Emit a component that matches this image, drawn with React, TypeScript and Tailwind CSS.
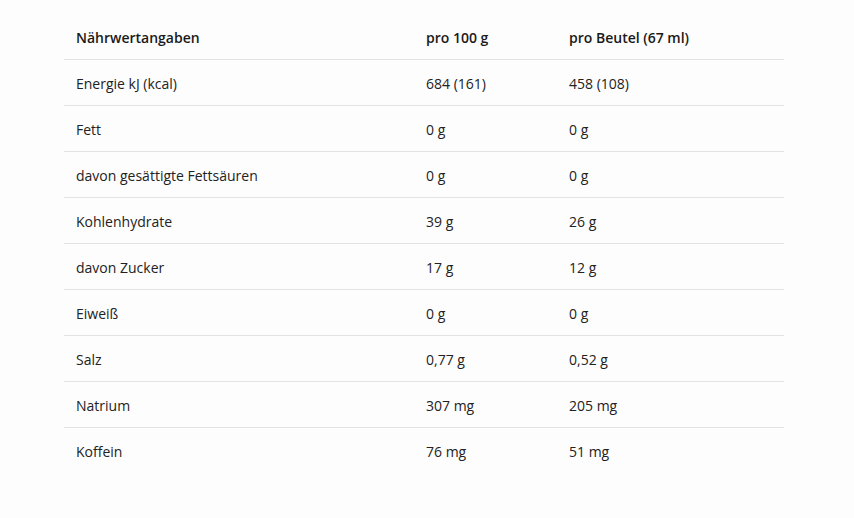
import React from 'react';

const rows = [
  { name: 'Energie kJ (kcal)', per100: '684 (161)', perBag: '458 (108)' },
  { name: 'Fett', per100: '0 g', perBag: '0 g' },
  { name: 'davon gesättigte Fettsäuren', per100: '0 g', perBag: '0 g' },
  { name: 'Kohlenhydrate', per100: '39 g', perBag: '26 g' },
  { name: 'davon Zucker', per100: '17 g', perBag: '12 g' },
  { name: 'Eiweiß', per100: '0 g', perBag: '0 g' },
  { name: 'Salz', per100: '0,77 g', perBag: '0,52 g' },
  { name: 'Natrium', per100: '307 mg', perBag: '205 mg' },
  { name: 'Koffein', per100: '76 mg', perBag: '51 mg' },
];

const App: React.FC = () => {
  return (
    <div className="w-[854px] h-[518px] bg-[#fdfdfd] pt-[14px] pl-[64px] font-['Open_Sans',sans-serif] text-[14px] text-[#222]">
      <div className="w-[720px]">
        <div className="grid grid-cols-[362px_143px_1fr] h-[46px] pt-[1px] items-center border-b border-[#e2e2e2] font-semibold text-[#1a1a1a]">
          <div className="pl-3">Nährwertangaben</div>
          <div>pro 100 g</div>
          <div>pro Beutel (67 ml)</div>
        </div>
        {rows.map((row, i) => (
          <div
            key={row.name}
            className={`grid grid-cols-[362px_143px_1fr] h-[46px] pt-[1px] items-center ${i < rows.length - 1 ? 'border-b border-[#e2e2e2]' : ''}`}
          >
            <div className="pl-3">{row.name}</div>
            <div>{row.per100}</div>
            <div>{row.perBag}</div>
          </div>
        ))}
      </div>
    </div>
  );
};

export default App;
